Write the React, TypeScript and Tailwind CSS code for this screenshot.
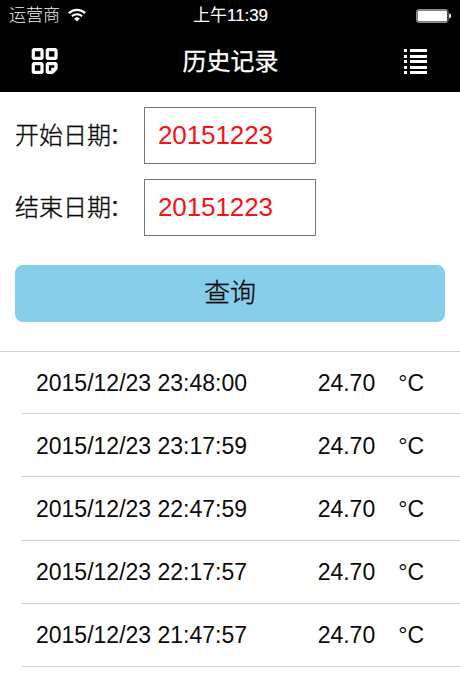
const RECORDS = [
  { time: "2015/12/23 23:48:00", value: "24.70" },
  { time: "2015/12/23 23:17:59", value: "24.70" },
  { time: "2015/12/23 22:47:59", value: "24.70" },
  { time: "2015/12/23 22:17:57", value: "24.70" },
  { time: "2015/12/23 21:47:57", value: "24.70" },
  { time: "2015/12/23 21:17:56", value: "24.70" },
];

function WifiIcon() {
  return (
    <svg width="18" height="14" viewBox="0 0 18 14" fill="none" stroke="#fff" className="mb-0.5">
      <path d="M.9 5.1a11.6 11.6 0 0 1 16.2 0" strokeWidth="2.2" />
      <path d="M3.9 8.3a7.4 7.4 0 0 1 10.2 0" strokeWidth="2" />
      <path d="M9 13.4 6.2 10.6a4.2 4.2 0 0 1 5.6 0z" fill="#fff" stroke="none" />
    </svg>
  );
}

function BatteryIcon() {
  return (
    <svg width="36" height="14" viewBox="0 0 36 14">
      <rect x=".5" y=".5" width="31.5" height="13" rx="2" fill="none" stroke="#8c8c8c" />
      <rect x="1.5" y="1.5" width="29.5" height="11" rx="1" fill="#fff" />
      <path d="M33.2 4.6c2.6.4 2.6 4.4 0 4.8z" fill="#fff" />
    </svg>
  );
}

function GridIcon() {
  return (
    <svg width="27" height="27" viewBox="0 0 27 27" fill="none" stroke="#fff" strokeWidth="3.2">
      <path d="M2.3 1.7H11v8.7H2.3z" strokeLinejoin="bevel" />
      <path d="M16.3 1.7H25v8.7h-8.7z" strokeLinejoin="bevel" />
      <path d="M2.3 15.7H11v8.7H2.3z" strokeLinejoin="bevel" />
      <path d="M16.3 15.7H25v5l-3.7 3.7h-5z" strokeLinejoin="bevel" />
      <path d="M20.3 19.8H25l-4.7 4.6z" fill="#fff" stroke="none" />
    </svg>
  );
}

function ListIcon() {
  return (
    <svg width="24" height="26" viewBox="0 0 24 26" fill="#fff" shapeRendering="crispEdges">
      {[1, 7, 12, 18, 23].map((y) => (
        <g key={y}>
          <rect x="0" y={y} width="3" height="3" />
          <rect x="6" y={y} width="17" height="3" />
        </g>
      ))}
    </svg>
  );
}

function DateField({ label, value }: { label: string; value: string }) {
  return (
    <label className="flex items-center">
      <span className="w-[129px] shrink-0 text-2xl font-light [-webkit-text-stroke:0.35px_#0a0a0a]">
        {label}
        <span className="-ml-0.5">：</span>
      </span>
      <input
        readOnly
        defaultValue={value}
        className="h-[57px] w-[172px] border border-[#777] bg-white px-[13px] text-[26px] tracking-[-0.1px] text-[#f51414] outline-none"
      />
    </label>
  );
}

export default function App() {
  return (
    <div
      lang="zh-CN"
      className="h-[690px] w-[460px] overflow-hidden bg-white font-['Liberation_Sans','Noto_Sans_CJK_SC',sans-serif] text-[#0a0a0a]"
    >
      <header className="h-[92px] bg-black text-white">
        <div className="grid h-[30px] grid-cols-3 items-center pr-2 pl-[9px]">
          <div className="flex items-center gap-2 pt-px text-[17px] leading-[30px] font-light text-[#f0f0f0]">
            运营商
            <WifiIcon />
          </div>
          <div className="pt-px text-center text-[17px] leading-[30px] whitespace-nowrap">
            上午
            <span className="tracking-[-0.1px] [-webkit-text-stroke:0.2px_#fff]">11:39</span>
          </div>
          <div className="flex justify-end">
            <BatteryIcon />
          </div>
        </div>
        <div className="flex h-[62px] items-center justify-between pr-8 pl-[31px]">
          <GridIcon />
          <h1 className="pr-px pt-px text-2xl [-webkit-text-stroke:0.3px_#fff]">历史记录</h1>
          <ListIcon />
        </div>
      </header>

      <form className="px-[15px] pt-[15px]">
        <div className="flex flex-col gap-[15px]">
          <DateField label="开始日期" value="20151223" />
          <DateField label="结束日期" value="20151223" />
        </div>
        <button
          type="button"
          className="mt-[29px] h-[57px] w-full rounded-lg bg-[#87ceeb] text-[26px] font-light [-webkit-text-stroke:0.35px_#0a0a0a]"
        >
          查询
        </button>
      </form>

      <ul className="mt-[29px] border-t border-[#d2d2d2]">
        {RECORDS.map((record) => (
          <li key={record.time} className="group pl-[22px]">
            <div className="flex h-[63.2px] items-center border-b border-[#cfcfcf] pt-px pr-9 pl-3.5 text-[23px] group-first:h-[62.2px] group-last:pt-[5px]">
              <span className="flex-1">{record.time}</span>
              <span>{record.value}</span>
              <span className="ml-[23px]">°C</span>
            </div>
          </li>
        ))}
      </ul>
    </div>
  );
}
